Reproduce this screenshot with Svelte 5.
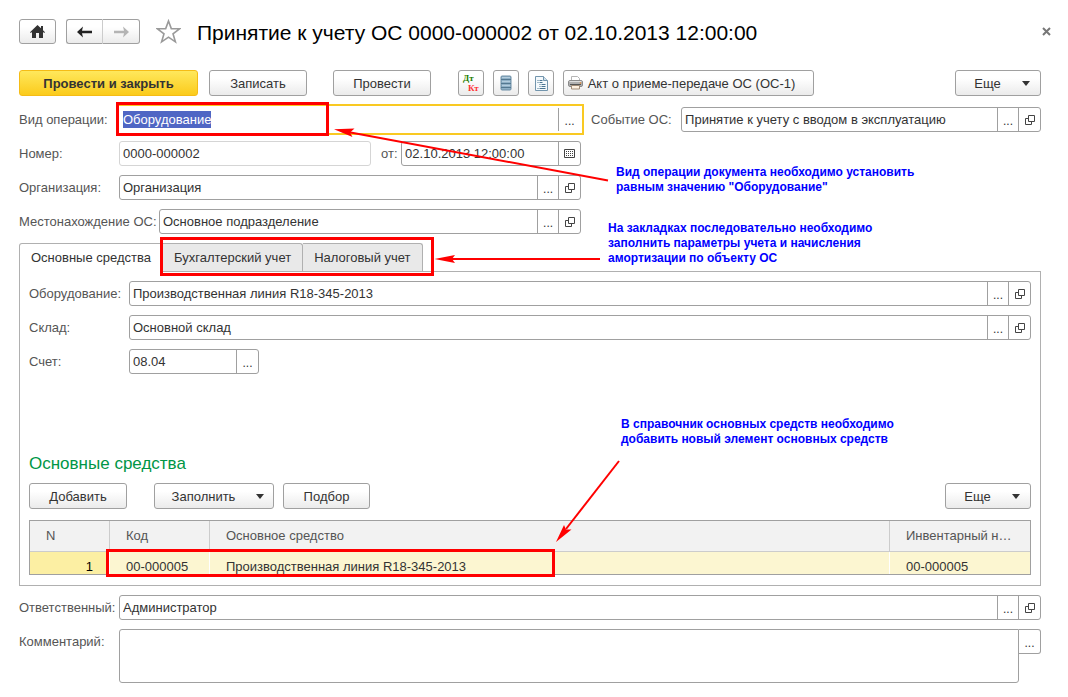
<script>
  import { onMount } from 'svelte';

  // Form data
  let doc = {
    operation: 'Оборудование',
    event: 'Принятие к учету с вводом в эксплуатацию',
    number: '0000-000002',
    date: '02.10.2013 12:00:00',
    organization: 'Организация',
    location: 'Основное подразделение',
    equipment: 'Производственная линия R18-345-2013',
    warehouse: 'Основной склад',
    account: '08.04',
    responsible: 'Администратор',
    comment: ''
  };

  const tabs = ['Основные средства', 'Бухгалтерский учет', 'Налоговый учет'];
  let currentTab = tabs[0];

  let assets = [
    { code: '00-000005', name: 'Производственная линия R18-345-2013', inventory: '00-000005' }
  ];
  let selectedRow = 0;

  let operationInput;

  onMount(() => {
    operationInput.focus();
    operationInput.select();
  });
</script>

{#snippet openIcon()}
  <svg width="10" height="10" viewBox="0 0 10 10" fill="none" stroke="#444" aria-hidden="true">
    <path d="M3.500 .5h6v6h-6z M3 3.500h-2.500v6h6v-2.500" />
  </svg>
{/snippet}

{#snippet caret()}
  <svg class="caret" width="8" height="5" viewBox="0 0 8 5" aria-hidden="true">
    <path d="M0 0h8L4 5z" fill="#333" />
  </svg>
{/snippet}

<main class="page">
  <header class="title-bar">
    <button class="btn home" aria-label="Домой">
      <svg width="15" height="13" viewBox="0 0 15 13" aria-hidden="true">
        <path d="M7.500 0 L11 3.300V1h2v4.200L15 7.200l-.8.9L13 7v6H9V8H6v5H2V7L.8 8.100 0 7.200z" fill="#333" />
      </svg>
    </button>
    <div class="history">
      <button class="btn" aria-label="Назад">
        <svg width="15" height="12" viewBox="0 0 15 12" aria-hidden="true">
          <path d="M0 6 L6 .5 L5 4.800H15v2.400H5L6 11.500z" fill="#222" />
        </svg>
      </button>
      <button class="btn" aria-label="Вперед">
        <svg width="15" height="12" viewBox="0 0 15 12" aria-hidden="true">
          <path d="M15 6 L9 .5 L10 4.800H0v2.400H10L9 11.500z" fill="#b4b4b4" />
        </svg>
      </button>
    </div>
    <button class="plain star" aria-label="В избранное">
      <svg width="25" height="25" viewBox="0 0 25 25" aria-hidden="true">
        <path d="M12.500 2 L15.300 9.600 L23.500 9.800 L17 14.800 L19.400 22.800 L12.500 18.100 L5.600 22.800 L8 14.800 L1.500 9.800 L9.700 9.600z" fill="#fff" stroke="#9a9a9a" stroke-width="1.600" />
      </svg>
    </button>
    <h1>Принятие к учету ОС 0000-000002 от 02.10.2013 12:00:00</h1>
    <button class="plain close" aria-label="Закрыть">
      <svg width="9" height="9" viewBox="0 0 9 9" aria-hidden="true">
        <path d="M1 1l7 7M8 1l-7 7" stroke="#777" stroke-width="2" />
      </svg>
    </button>
  </header>

  <div class="toolbar">
    <button class="btn primary">Провести и закрыть</button>
    <button class="btn action">Записать</button>
    <button class="btn action apart">Провести</button>
    <div class="icon-group">
      <button class="btn icon" aria-label="Дт/Кт">
        <svg width="18" height="20" viewBox="0 0 18 20" aria-hidden="true">
          <text x="1" y="8" class="debit">Дт</text>
          <text x="6" y="18" class="credit">Кт</text>
        </svg>
      </button>
      <button class="btn icon" aria-label="Регистр">
        <svg width="12" height="16" viewBox="0 0 12 16" aria-hidden="true">
          <rect x="1" y="1" width="10" height="14" rx="1" fill="#8fb0c6" stroke="#6d8ea5" />
          <path d="M1 4.500h10M1 8.500h10M1 12.500h10" stroke="#547890" />
          <path d="M2 2.500h8M2 6.500h8M2 10.500h8" stroke="#b4cddd" />
        </svg>
      </button>
      <button class="btn icon" aria-label="Отчет">
        <svg width="13" height="15" viewBox="0 0 13 15" aria-hidden="true">
          <path d="M.5 .5h8l4 4v10H.5z" fill="#f4f9fc" stroke="#7295ad" />
          <path d="M8.500 .5v4h4" fill="#cfe0eb" stroke="#7295ad" />
          <path d="M2.500 4.500h1M4.500 4.500h3M2.500 6.500h1M4.500 6.500h3M4.500 8.500h1M6.500 8.500h4M4.500 10.500h1M6.500 10.500h4M2.500 12.500h1M4.500 12.500h6" stroke="#4b7693" />
        </svg>
      </button>
      <button class="btn print">
        <svg width="15" height="14" viewBox="0 0 15 14" aria-hidden="true">
          <path d="M3.500 5V.5h6l2 2V5" fill="#fff" stroke="#b5b5b5" />
          <rect x="0.500" y="4.500" width="14" height="6" rx="1.500" fill="#b0b0b0" stroke="#8a8a8a" />
          <path d="M1.500 5.500h12" stroke="#dedede" />
          <path d="M2 8.500h11" stroke="#555" />
          <path d="M3.500 9.500h8v3.500h-8z" fill="#fdf0e0" stroke="#a08c78" />
          <circle cx="12.500" cy="7" r="0.800" fill="#e8862a" />
        </svg>
        Акт о приеме-передаче ОС (ОС-1)
      </button>
    </div>
    <button class="btn more">Еще {@render caret()}</button>
  </div>

  <div class="top-form">
    <div class="row">
      <label for="operation">Вид операции:</label>
      <div class="field focused">
        <input id="operation" bind:this={operationInput} bind:value={doc.operation} />
        <button class="dots" aria-label="Выбрать вид операции">...</button>
      </div>
    </div>
    <div class="row event">
      <label for="event">Событие ОС:</label>
      <div class="field">
        <input id="event" bind:value={doc.event} />
        <button class="dots" aria-label="Выбрать событие">...</button>
        <button aria-label="Открыть событие">{@render openIcon()}</button>
      </div>
    </div>
    <div class="row left">
      <label for="number">Номер:</label>
      <div class="field muted">
        <input id="number" bind:value={doc.number} />
      </div>
      <label for="date" class="from">от:</label>
      <div class="field date">
        <input id="date" bind:value={doc.date} />
        <button aria-label="Календарь">
          <svg width="11" height="9" viewBox="0 0 11 9" aria-hidden="true">
            <path d="M.5 .5h10v8H.5z" fill="none" stroke="#444" />
            <path d="M2 2.500h7M2 4.500h7M2 6.500h7" stroke="#444" stroke-dasharray="1 1" />
          </svg>
        </button>
      </div>
    </div>
    <div class="row left">
      <label for="organization">Организация:</label>
      <div class="field">
        <input id="organization" bind:value={doc.organization} />
        <button class="dots" aria-label="Выбрать организацию">...</button>
        <button aria-label="Открыть организацию">{@render openIcon()}</button>
      </div>
    </div>
    <div class="row left">
      <label for="location" class="wide">Местонахождение ОС:</label>
      <div class="field">
        <input id="location" bind:value={doc.location} />
        <button class="dots" aria-label="Выбрать подразделение">...</button>
        <button aria-label="Открыть подразделение">{@render openIcon()}</button>
      </div>
    </div>
  </div>

  <section>
    <div class="tabs" role="tablist">
      {#each tabs as tab}
        <button
          role="tab"
          class:active={currentTab === tab}
          aria-selected={currentTab === tab}
          on:click={() => currentTab = tab}
        >
          {tab}
        </button>
      {/each}
    </div>

    <div class="panel">
      {#if currentTab === tabs[0]}
        <div class="panel-form">
          <div class="row">
            <label for="equipment">Оборудование:</label>
            <div class="field">
              <input id="equipment" bind:value={doc.equipment} />
              <button class="dots" aria-label="Выбрать оборудование">...</button>
              <button aria-label="Открыть оборудование">{@render openIcon()}</button>
            </div>
          </div>
          <div class="row">
            <label for="warehouse">Склад:</label>
            <div class="field">
              <input id="warehouse" bind:value={doc.warehouse} />
              <button class="dots" aria-label="Выбрать склад">...</button>
              <button aria-label="Открыть склад">{@render openIcon()}</button>
            </div>
          </div>
          <div class="row">
            <label for="account">Счет:</label>
            <div class="field account">
              <input id="account" bind:value={doc.account} />
              <button class="dots" aria-label="Выбрать счет">...</button>
            </div>
          </div>
        </div>

        <h2>Основные средства</h2>

        <div class="toolbar table-tools">
          <button class="btn action">Добавить</button>
          <button class="btn fill">Заполнить {@render caret()}</button>
          <button class="btn pick">Подбор</button>
          <button class="btn more">Еще {@render caret()}</button>
        </div>

        <table>
          <thead>
            <tr>
              <th class="num">N</th>
              <th class="code">Код</th>
              <th>Основное средство</th>
              <th class="inventory">Инвентарный номер</th>
            </tr>
          </thead>
          <tbody>
            {#each assets as asset, i}
              <tr class:selected={selectedRow === i} on:click={() => selectedRow = i}>
                <td class="num">{i + 1}</td>
                <td>{asset.code}</td>
                <td>{asset.name}</td>
                <td>{asset.inventory}</td>
              </tr>
            {/each}
          </tbody>
        </table>
      {/if}
    </div>
  </section>

  <div class="row">
    <label for="responsible">Ответственный:</label>
    <div class="field">
      <input id="responsible" bind:value={doc.responsible} />
      <button class="dots" aria-label="Выбрать ответственного">...</button>
      <button aria-label="Открыть ответственного">{@render openIcon()}</button>
    </div>
  </div>

  <div class="row comment">
    <label for="comment">Комментарий:</label>
    <textarea id="comment" bind:value={doc.comment}></textarea>
    <button class="dots" aria-label="Открыть комментарий">...</button>
  </div>

  <!-- Training notes on top of the form -->
  <div class="frame frame-operation"></div>
  <div class="frame frame-tabs"></div>
  <div class="frame frame-asset"></div>

  <svg class="arrows" width="640" height="560" viewBox="0 0 640 560" aria-hidden="true">
    <g stroke="#f00" stroke-width="2">
      <path d="M608 180.500L348 132" />
      <path d="M600 259H450" />
      <path d="M619 461L566 529" />
    </g>
    <g fill="#f00">
      <path d="M334 129.300L354.500 128.500L350 132.500L352.500 137z" />
      <path d="M434.500 259L455 255L452 259L455 263z" />
      <path d="M556 542L564 525L566 529.500L571.500 529.500z" />
    </g>
  </svg>

  <p class="note note-operation">Вид операции документа необходимо установить<br />равным значению "Оборудование"</p>
  <p class="note note-tabs">На закладках последовательно необходимо<br />заполнить параметры учета и начисления<br />амортизации по объекту ОС</p>
  <p class="note note-asset">В справочник основных средств необходимо<br />добавить новый элемент основных средств</p>
</main>

<style>
  :global(body) {
    background: #fff;
  }

  .page {
    position: relative;
    display: flex;
    flex-direction: column;
    gap: 9px;
    padding: 19px 27px 14px 19px;
    font-family: 'Liberation Sans', Arial, sans-serif;
    font-size: 13px;
    line-height: 17px;
    color: #333;
  }

  button, input, textarea {
    box-sizing: border-box;
    margin: 0;
    font: inherit;
    color: inherit;
  }

  button {
    padding: 0;
    cursor: pointer;
  }

  svg {
    flex: none;
  }

  .btn {
    display: flex;
    align-items: center;
    justify-content: center;
    height: 26px;
    border: 1px solid #a0a0a0;
    border-radius: 3px;
    background: linear-gradient(#fff 30%, #ebebeb);
    white-space: nowrap;
  }

  .plain {
    border: none;
    background: none;
  }

  .title-bar {
    display: flex;
    align-items: center;
    height: 25px;
    margin-right: -10px;
  }

  .title-bar .btn {
    width: 37px;
    height: 25px;
  }

  .history {
    display: flex;
    margin: 0 16px 0 10px;
  }

  .history .btn:first-child {
    border-right-color: #ccc;
    border-radius: 3px 0 0 3px;
  }

  .history .btn:last-child {
    border-left: none;
    border-radius: 0 3px 3px 0;
  }

  .star, .close {
    display: flex;
  }

  h1 {
    flex: 1;
    margin: 0 0 0 16px;
    padding-top: 2px;
    font-size: 21px;
    line-height: 25px;
    font-weight: normal;
    color: #000;
    white-space: nowrap;
  }

  .toolbar {
    display: flex;
    gap: 11px;
    margin: 17px 0 2px;
  }

  .primary {
    width: 179px;
    border-color: #f5bc16;
    background: linear-gradient(#ffe85c, #fbcb1c);
    font-weight: bold;
  }

  .action {
    width: 98px;
  }

  .apart {
    margin-left: 15px;
  }

  .icon-group {
    display: flex;
    gap: 9px;
    margin-left: 16px;
  }

  .icon {
    width: 26px;
  }

  .debit, .credit {
    font-family: 'Liberation Serif', serif;
    font-size: 9px;
    font-weight: bold;
    fill: #1f7d00;
  }

  .credit {
    fill: #f33;
  }

  .print {
    gap: 5px;
    width: 251px;
    padding-right: 14px;
  }

  .more {
    gap: 21px;
    width: 86px;
    margin-left: auto;
    padding-left: 8px;
  }

  .top-form {
    display: grid;
    grid-template-columns: 55% 1fr;
    gap: 9px 10px;
  }

  .row {
    display: flex;
    min-width: 0;
  }

  .left {
    grid-column: 1;
  }

  label {
    flex: none;
    width: 100px;
    line-height: 25px;
    color: #555;
    white-space: nowrap;
  }

  .event label {
    width: 90px;
  }

  label.wide {
    width: 140px;
  }

  label.from {
    width: 20px;
    margin-left: 10px;
  }

  .field {
    display: flex;
    flex: 1;
    box-sizing: border-box;
    min-width: 0;
    height: 25px;
    border: 1px solid #a0a0a0;
    border-radius: 3px;
    background: #fff;
  }

  .field.muted {
    border-color: #d5d5d5;
  }

  .field.date {
    flex: 0 0 180px;
  }

  .field.account {
    flex: 0 0 130px;
  }

  .field.focused {
    border-color: #fff;
    border-radius: 0;
    outline: 2px solid #f9c922;
    outline-offset: 1px;
  }

  .field input {
    flex: 1;
    min-width: 0;
    padding: 0 3px;
    border: none;
    outline: none;
    background: none;
  }

  .field input::selection {
    background: #4f66c4;
    color: #fff;
  }

  .field button, .comment button {
    display: flex;
    align-items: center;
    justify-content: center;
    flex: none;
    width: 21px;
    border: none;
    border-left: 1px solid #a0a0a0;
    background: none;
  }

  .field button:last-child {
    width: 22px;
  }

  .field .dots, .comment .dots {
    padding-top: 4px;
    font-size: 12px;
  }

  .tabs {
    display: flex;
    height: 28px;
  }

  .tabs button {
    padding: 0 11px;
    border: 1px solid #b0b0b0;
    border-left: none;
    border-bottom: none;
    border-radius: 0 3px 0 0;
    background: #e9e9e9;
  }

  .tabs button:first-child {
    border-left: 1px solid #b0b0b0;
    border-radius: 3px 3px 0 0;
  }

  .tabs .active {
    margin-bottom: -1px;
    padding-bottom: 1px;
    background: #fff;
    z-index: 1;
  }

  .panel {
    padding: 9px 9px 10px;
    border: 1px solid #b0b0b0;
  }

  .panel-form {
    display: grid;
    gap: 9px;
  }

  h2 {
    margin: 80px 0 9px;
    font-size: 17px;
    line-height: 20px;
    font-weight: normal;
    color: #009646;
  }

  .table-tools {
    gap: 9px;
    margin: 0 0 11px;
  }

  .fill {
    gap: 21px;
    width: 120px;
    margin-left: 18px;
    padding-left: 8px;
  }

  .pick {
    width: 87px;
  }

  table {
    width: 100%;
    border: 1px solid #a0a0a0;
    border-collapse: separate;
    border-spacing: 0;
    table-layout: fixed;
  }

  th, td {
    box-sizing: border-box;
    padding: 0 16px;
    overflow: hidden;
    text-align: left;
    text-overflow: ellipsis;
    white-space: nowrap;
    border-right: 1px solid #fff;
  }

  th {
    height: 31px;
    padding-bottom: 1px;
    border-right-color: #ccc;
    border-bottom: 1px solid #ccc;
    background: #f2f2f2;
    font-weight: normal;
    color: #555;
  }

  th:last-child, td:last-child {
    border-right: none;
  }

  td {
    height: 22px;
    padding-top: 7px;
    line-height: 15px;
  }

  .selected td {
    background: #fcf6d1;
  }

  .selected td.num {
    background: #fcefa3;
    color: #000;
  }

  th.num {
    width: 80px;
  }

  td.num {
    text-align: right;
  }

  .code {
    width: 100px;
  }

  .inventory {
    width: 140px;
  }

  textarea {
    flex: 1;
    height: 54px;
    padding: 3px;
    border: 1px solid #a0a0a0;
    border-radius: 3px 0 3px 3px;
    resize: none;
  }

  .comment button {
    width: 22px;
    height: 25px;
    border: 1px solid #a0a0a0;
    border-left: none;
    border-radius: 0 3px 3px 0;
  }

  .frame {
    position: absolute;
    box-sizing: border-box;
    border: 3px solid #f00;
    pointer-events: none;
    z-index: 2;
  }

  .frame-operation {
    left: 116px;
    top: 102px;
    width: 213px;
    height: 34px;
  }

  .frame-tabs {
    left: 160px;
    top: 237px;
    width: 274px;
    height: 39px;
  }

  .frame-asset {
    left: 106px;
    top: 549px;
    width: 449px;
    height: 28px;
  }

  .arrows {
    position: absolute;
    left: 0;
    top: 0;
    pointer-events: none;
    z-index: 2;
  }

  .note {
    position: absolute;
    margin: 0;
    font-size: 12px;
    line-height: 15px;
    font-weight: bold;
    color: #00f;
    white-space: nowrap;
  }

  .note-operation {
    left: 616px;
    top: 165px;
  }

  .note-tabs {
    left: 608px;
    top: 221px;
  }

  .note-asset {
    left: 621px;
    top: 417px;
  }
</style>
